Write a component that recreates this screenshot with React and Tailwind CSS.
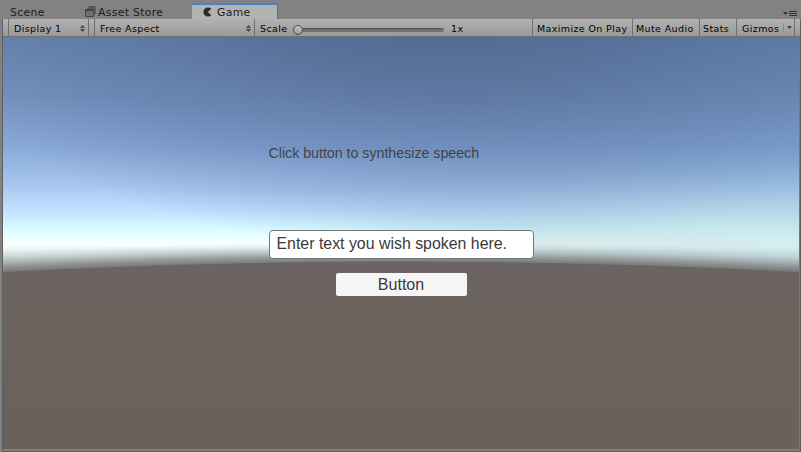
const UI = "font-['DejaVu_Sans',Verdana,sans-serif]";
const SCENE = "font-['Liberation_Sans',Arial,sans-serif]";

function Updown() {
  return (
    <svg width="5" height="7" viewBox="0 0 5 7" className="shrink-0" fill="#444">
      <path d="M2.5 0 5 3H0zM2.5 7 0 4h5z" />
    </svg>
  );
}

function StoreIcon() {
  return (
    <svg width="11" height="11" viewBox="0 0 11 11" className="shrink-0" fill="none" stroke="#444">
      <path d="M2.5 3.5 4.5 .5h5.5v7l-1.5 2z" fill="#666" />
      <path d="M.5 3.5h8v7h-8z" fill="#727272" />
      <path d="M.5 4.5h8M5.5 3.5l1.5-3" />
    </svg>
  );
}

function GameIcon() {
  return (
    <svg width="9" height="10" viewBox="0 0 9 10" className="shrink-0" fill="#2b2b2b">
      <path d="M8.3 1.8A4.6 4.6 0 1 0 8.3 8.2L4.8 5z" />
    </svg>
  );
}

function Sky() {
  return (
    <svg width="796" height="412" viewBox="0 0 796 412" preserveAspectRatio="none" className="absolute inset-0">
      <defs>
        <linearGradient id="sky" gradientUnits="userSpaceOnUse" x1="0" y1="0" x2="0" y2="230">
          <stop offset="0" stopColor="#6884ae" />
          <stop offset="0.26" stopColor="#7794c0" />
          <stop offset="0.48" stopColor="#8aaada" />
          <stop offset="0.65" stopColor="#a8c8f0" />
          <stop offset="0.76" stopColor="#c2e3ff" />
          <stop offset="0.84" stopColor="#dbfdff" />
          <stop offset="0.88" stopColor="#efffff" />
          <stop offset="0.905" stopColor="#faffff" />
          <stop offset="1" stopColor="#b0c0be" />
        </linearGradient>
        <radialGradient id="zenith" gradientUnits="userSpaceOnUse" cx="0" cy="0" r="1" gradientTransform="translate(450 -30) scale(540 245)">
          <stop offset="0" stopColor="#465c80" stopOpacity="0.7" />
          <stop offset="0.35" stopColor="#485f86" stopOpacity="0.52" />
          <stop offset="0.7" stopColor="#4a6695" stopOpacity="0.28" />
          <stop offset="1" stopColor="#4a6695" stopOpacity="0" />
        </radialGradient>
        <linearGradient id="shade" x1="0" y1="0" x2="1" y2="0">
          <stop offset="0.4" stopColor="#50789c" stopOpacity="0" />
          <stop offset="1" stopColor="#50789c" stopOpacity="0.16" />
        </linearGradient>
        <radialGradient id="teal" gradientUnits="userSpaceOnUse" cx="0" cy="0" r="1" gradientTransform="translate(796 205) scale(460 75)">
          <stop offset="0" stopColor="#d2f2f0" stopOpacity="0.6" />
          <stop offset="0.5" stopColor="#b8dcdc" stopOpacity="0.3" />
          <stop offset="1" stopColor="#98c0cc" stopOpacity="0" />
        </radialGradient>
        <linearGradient id="ground" x1="0" y1="0" x2="0" y2="1">
          <stop offset="0" stopColor="#6a6464" />
          <stop offset="0.25" stopColor="#6a625d" />
          <stop offset="1" stopColor="#6a615b" />
        </linearGradient>
        <radialGradient id="fog" gradientUnits="userSpaceOnUse" cx="398" cy="8225" r="8021">
          <stop offset="0.997" stopColor="#6a6464" />
          <stop offset="0.9981" stopColor="#8b8d8d" stopOpacity="0.8" />
          <stop offset="0.999" stopColor="#a8b5b5" stopOpacity="0.4" />
          <stop offset="1" stopColor="#c8dcdb" stopOpacity="0" />
        </radialGradient>
      </defs>
      <rect width="796" height="240" fill="url(#sky)" />
      <rect width="796" height="240" fill="url(#zenith)" />
      <rect width="796" height="240" fill="url(#shade)" />
      <rect width="796" height="230" fill="url(#teal)" />
      <rect y="190" width="796" height="50" fill="url(#fog)" />
      <path d="M0 235Q398 214 796 235V412H0z" fill="url(#ground)" />
    </svg>
  );
}

function Tabs() {
  return (
    <div className="flex h-[19px] shrink-0 items-stretch pl-[10px] text-[10.8px] leading-[16px] tracking-[0.35px] text-[#1c1c1c]">
      <span className="w-[75px] pt-[5px]">Scene</span>
      <div className="flex w-[107px] gap-[2px] pt-[5px]">
        <span className="pt-px"><StoreIcon /></span>
        <span className="whitespace-nowrap">Asset Store</span>
      </div>
      <div className="mt-[3px] flex w-[86px] gap-[5px] rounded-t-[2px] border-t-2 border-r border-t-[#4b80cc] border-r-[#6e6e6e] bg-[#b3b3b3] pl-[11px]">
        <span className="pt-[2px]"><GameIcon /></span>
        <span>Game</span>
      </div>
      <svg width="14" height="6" viewBox="0 0 14 6" className="mt-[11px] mr-[4px] ml-auto" fill="#333">
        <path d="M0 1h5L2.5 4zM6 0h8v1H6zM6 2h8v1H6zM6 4h8v1H6z" />
      </svg>
    </div>
  );
}

const cell = "flex h-full shrink-0 items-center border-l border-[#6f6f6f] whitespace-nowrap";

function Toolbar() {
  return (
    <div className="flex h-[18px] shrink-0 items-center border-b border-[#707070] bg-linear-to-b from-[#b2b2b2] to-[#999999] pl-[5px] text-[9.5px] leading-[16px] tracking-[0.38px] text-black">
      <div className={cell + " w-[80px] justify-between pt-[2px] pr-[3px] pl-[5px]"}><span>Display 1</span><Updown /></div>
      <div className={cell + " w-[6px]"} />
      <div className={cell + " w-[160px] justify-between pt-[2px] pr-[3px] pl-[5px]"}><span>Free Aspect</span><Updown /></div>
      <div className={cell + " w-[278px] pl-[5px]"}>
        <span className="w-[33px] pt-[3px]">Scale</span>
        <div className="flex w-[151px] items-center pt-[4px]">
          <span className="z-10 size-[10px] shrink-0 rounded-full border border-[#484848] bg-linear-to-b from-[#c4c4c4] to-[#999]" />
          <span className="-ml-px h-[4px] flex-1 rounded-full border-t border-[#505050] bg-[#707070]" />
        </div>
        <span className="pt-[3px] pl-[7px]">1x</span>
      </div>
      <div className={cell + " w-[100px] pt-[2px] pl-[4px]"}>Maximize On Play</div>
      <div className={cell + " w-[67px] pt-[2px] pl-[3px]"}>Mute Audio</div>
      <div className={cell + " w-[37px] pt-[2px] pl-[3px]"}>Stats</div>
      <div className={cell + " w-[58px] pl-[5px]"}>
        <span className="w-[41px] pt-[2px]">Gizmos</span>
        <span className="flex h-[9px] items-center border-l border-[#888] pl-[3px]">
          <svg width="5" height="3" fill="#444"><path d="M0 0h5L2.5 3z" /></svg>
        </span>
      </div>
      <div className={cell + " w-[5px]"} />
    </div>
  );
}

export default function App() {
  return (
    <div className={"flex h-[452px] w-[801px] flex-col overflow-hidden bg-[#828282] " + UI}>
      <Tabs />
      <div className="ml-[2px] flex flex-1 flex-col border-r border-b border-l border-[#606060]">
        <Toolbar />
        <div className={"relative flex flex-1 flex-col items-center overflow-hidden border-r border-b border-[#7c7875] text-[#3a3a3a] " + SCENE}>
          <Sky />
          <div className="relative mt-[106px] w-[265px] text-[14.2px] leading-[20px] opacity-90">Click button to synthesize speech</div>
          <div className="relative mt-[67px] h-[29px] w-[265px] rounded-[4px] border border-[#6f7777] bg-white pl-[7px] text-[15.9px] leading-[25px] whitespace-nowrap">Enter text you wish spoken here.</div>
          <div className="relative mt-[14px] h-[23px] w-[131px] rounded-[2px] bg-[#f5f5f5] text-center text-[16px] leading-[24px]">Button</div>
        </div>
      </div>
    </div>
  );
}
